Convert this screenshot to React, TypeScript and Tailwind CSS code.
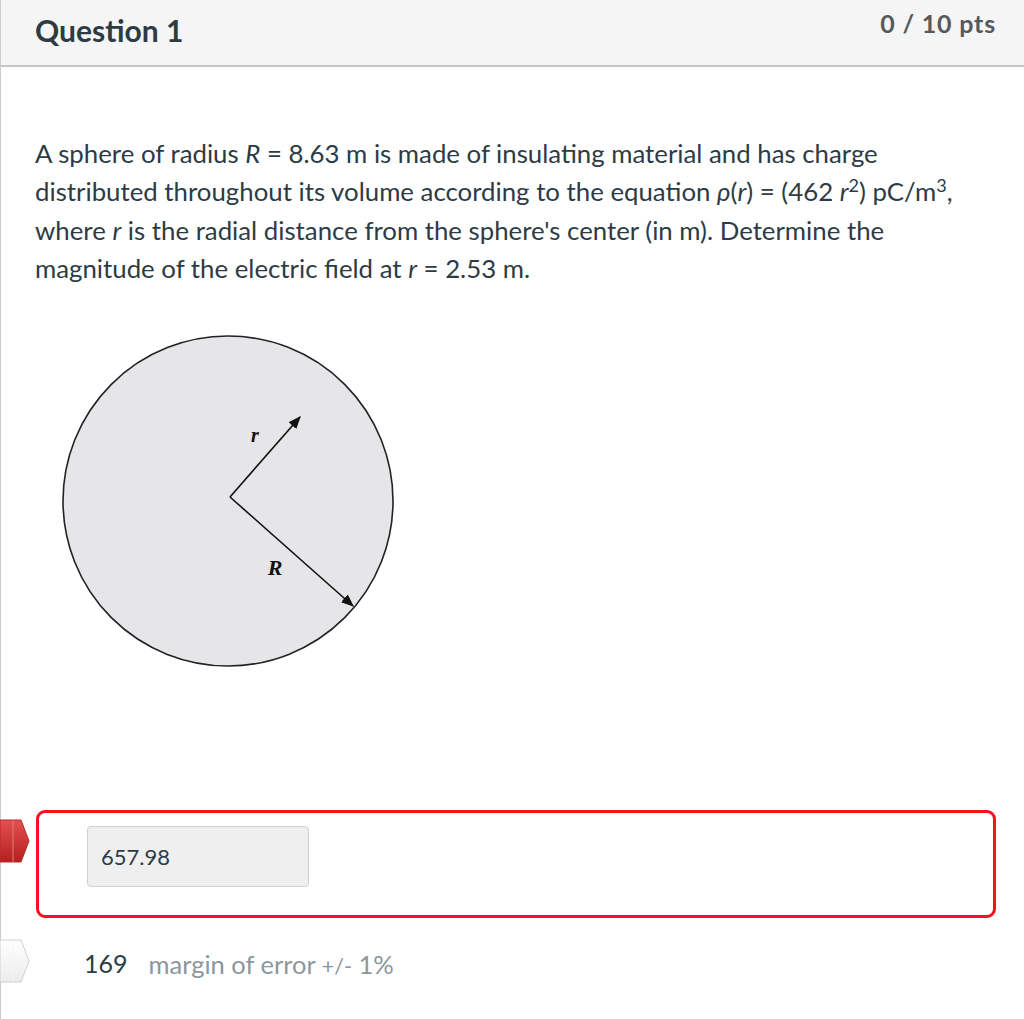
import React from "react";

function Marker({ variant }: { variant: "red" | "white" }) {
  const red = variant === "red";
  return (
    <svg width="30" height="44" viewBox="0 0 30 44" className="absolute left-0">
      <defs>
        <linearGradient id={red ? "gr" : "gw"} x1="0" y1="0" x2="0" y2="1">
          <stop offset="0" stopColor={red ? "#e25050" : "#ffffff"} />
          <stop offset="1" stopColor={red ? "#b42020" : "#ececec"} />
        </linearGradient>
      </defs>
      <polygon
        points="0,1 21,1 29,22 21,43 0,43"
        fill={`url(#${red ? "gr" : "gw"})`}
        stroke={red ? "#b72a2a" : "#cfcfcf"}
        strokeWidth="1"
      />
      <line x1="13" y1="1" x2="13" y2="43" stroke={red ? "#e67a7a" : "#f4f4f4"} strokeWidth="1" />
    </svg>
  );
}

export default function App() {
  return (
    <div
      className="min-h-screen bg-white border-l border-[#c7cdd1] text-[#2d3b45]"
      style={{ fontFamily: "Lato, 'Open Sans', sans-serif" }}
    >
      <div className="h-[67px] bg-[#f5f5f5] border-b-2 border-[#c2c6c9] flex justify-between pl-[34px] pr-[28px]">
        <div className="mt-[12px] text-[30px] leading-[36px] font-bold text-[#2d3b45]">Question 1</div>
        <div className="mt-[8px] text-[25px] leading-[30px] font-bold tracking-[0.8px] text-[#555a5e]">0 / 10 pts</div>
      </div>

      <div className="pl-[34px] pt-[67px]">
        <p className="text-[25.8px] leading-[38.4px] w-[980px]">
          A sphere of radius <i>R</i> = 8.63 m is made of insulating material and has charge
          <br />
          distributed throughout its volume according to the equation <i>ρ</i>(<i>r</i>) = (462 <i>r</i>
          <sup className="text-[18px]">2</sup>) pC/m<sup className="text-[18px]">3</sup>,
          <br />
          where <i>r</i> is the radial distance from the sphere's center (in m). Determine the
          <br />
          magnitude of the electric field at <i>r</i> = 2.53 m.
        </p>

        <svg width="340" height="340" viewBox="0 0 340 340" className="ml-[25px] mt-[45px] block">
          <defs>
            <marker id="ah" viewBox="0 0 10 10" refX="9" refY="5" markerWidth="8" markerHeight="8" orient="auto" markerUnits="strokeWidth">
              <path d="M0,1 L10,5 L0,9 z" fill="#111" />
            </marker>
          </defs>
          <circle cx="168" cy="168" r="165" fill="#e6e5e7" stroke="#222" strokeWidth="1.6" />
          <line x1="170" y1="164" x2="240" y2="84" stroke="#111" strokeWidth="1.6" markerEnd="url(#ah)" />
          <line x1="170" y1="164" x2="293" y2="273" stroke="#111" strokeWidth="1.6" markerEnd="url(#ah)" />
          <text
            x="195"
            y="109"
            textAnchor="middle"
            fontSize="20"
            fontStyle="italic"
            fontWeight="bold"
            fontFamily="'Liberation Serif', serif"
            fill="#111"
          >
            r
          </text>
          <text
            x="215"
            y="242"
            textAnchor="middle"
            fontSize="22"
            fontStyle="italic"
            fontWeight="bold"
            fontFamily="'Liberation Serif', serif"
            fill="#111"
          >
            R
          </text>
        </svg>
      </div>

      <div className="relative mt-[137px]">
        <div className="absolute top-[9px] -left-px">
          <Marker variant="red" />
        </div>
        <div className="ml-[35px] w-[960px] h-[108px] border-[3px] border-[#fa0f1e] rounded-[9px] pl-[48px] pt-[13px]">
          <div className="w-[222px] h-[61px] bg-[#efefef] border border-[#cfd1d2] rounded-[4px] flex items-center pl-[13px] text-[22px]">
            657.98
          </div>
        </div>
      </div>

      <div className="relative mt-[24px] h-[44px] flex items-center">
        <div className="absolute -top-[3px] -left-px">
          <Marker variant="white" />
        </div>
        <span className="ml-[83px] text-[25px]">169</span>
        <span className="ml-[21px] text-[25.5px] text-[#8b969e]">
          margin of error <span className="text-[21.5px]">+/-</span> 1%
        </span>
      </div>
    </div>
  );
}
